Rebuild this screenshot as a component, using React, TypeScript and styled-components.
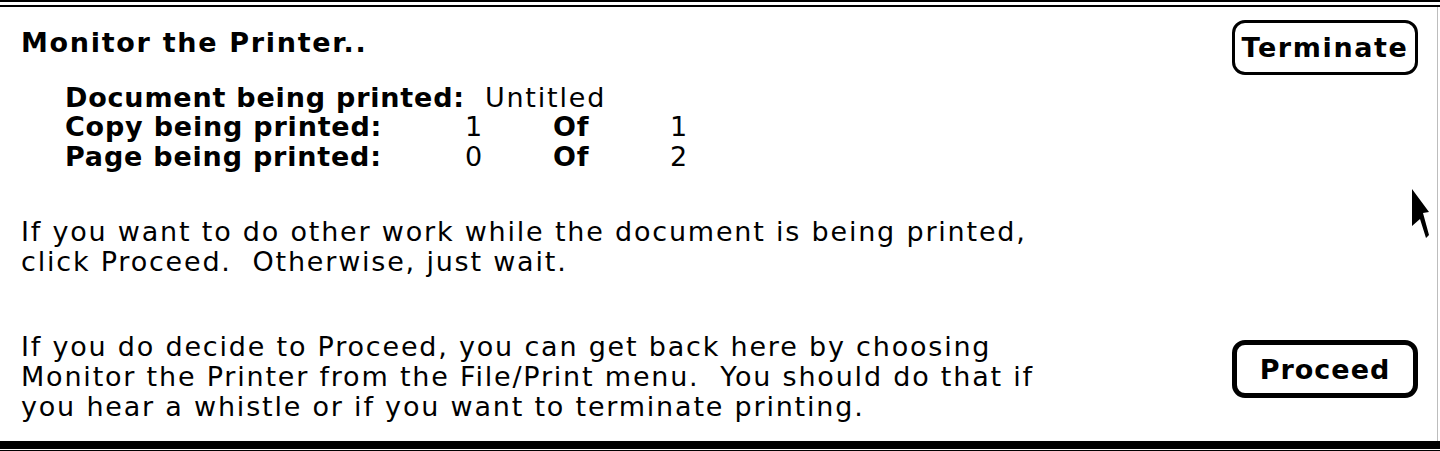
import React from "react";
import styled, { createGlobalStyle } from "styled-components";

const Global = createGlobalStyle`
  html, body { margin: 0; padding: 0; background: #fff; }
  body { font-family: "DejaVu Sans", "Liberation Sans", sans-serif; color: #000; }
`;

const Dialog = styled.div`
  position: relative;
  box-sizing: border-box;
  width: 1440px;
  height: 451px;
  display: flex;
  justify-content: space-between;
  padding: 28px 22px 0 21px;
  background: #fff;
  box-shadow:
    inset 0 2px 0 #000,
    inset 0 5px 0 #fff,
    inset 0 7px 0 #000,
    inset 0 -1px 0 #000,
    inset 0 -2px 0 #fff,
    inset 0 -10px 0 #000,
    inset -2px 0 0 #fff,
    inset -3px 0 0 #bdbdbd;
`;

const Content = styled.div`
  display: flex;
  flex-direction: column;
`;

const Title = styled.div`
  font-family: "DejaVu Sans", sans-serif;
  font-weight: bold;
  font-size: 27px;
  line-height: 30px;
  letter-spacing: 1.7px;
`;

const Details = styled.div`
  margin: 25px 0 0 44px;
  display: grid;
  grid-template-columns: 400px 88px 117px auto;
  grid-auto-rows: 29.5px;
  align-items: center;
`;

const DocRow = styled.div`
  grid-column: 1 / -1;
  display: flex;
  gap: 20px;
  align-items: baseline;
`;

const Label = styled.span`
  font-weight: bold;
  font-size: 27px;
  line-height: 30px;
  letter-spacing: 0.8px;
`;

const Value = styled.span`
  font-weight: 400;
  font-size: 27px;
  line-height: 30px;
  letter-spacing: 1.8px;
`;

const Paragraph = styled.p<{ $gap: number }>`
  margin: ${(p) => p.$gap}px 0 0 0;
  font-weight: 400;
  font-size: 27px;
  line-height: 30px;
  letter-spacing: 1.8px;
  white-space: pre;
`;

const ButtonColumn = styled.div`
  display: flex;
  flex-direction: column;
  justify-content: space-between;
  padding: 20px 0 53px;
  margin-top: -28px;
`;

const MacButton = styled.button<{ $default?: boolean }>`
  box-sizing: border-box;
  width: 186px;
  height: ${(p) => (p.$default ? 58 : 55)}px;
  border: ${(p) => (p.$default ? 5 : 3)}px solid #000;
  border-radius: 13px;
  background: #fff;
  color: #000;
  font-family: "DejaVu Sans", sans-serif;
  font-weight: bold;
  font-size: 27px;
  letter-spacing: ${(p) => (p.$default ? 1 : 1.6)}px;
  padding: 0;
  display: flex;
  align-items: center;
  justify-content: center;
`;

const Cursor = styled.svg`
  position: absolute;
  left: 1410px;
  top: 188px;
`;

export default function App() {
  return (
    <>
      <Global />
      <Dialog>
        <Content>
          <Title>Monitor the Printer..</Title>
          <Details>
            <DocRow>
              <Label>Document being printed:</Label>
              <Value>Untitled</Value>
            </DocRow>
            <Label>Copy being printed:</Label>
            <Value>1</Value>
            <Label>Of</Label>
            <Value>1</Value>
            <Label>Page being printed:</Label>
            <Value>0</Value>
            <Label>Of</Label>
            <Value>2</Value>
          </Details>
          <Paragraph $gap={45}>
            {"If you want to do other work while the document is being printed,\nclick Proceed.  Otherwise, just wait."}
          </Paragraph>
          <Paragraph $gap={55}>
            {"If you do decide to Proceed, you can get back here by choosing\nMonitor the Printer from the File/Print menu.  You should do that if\nyou hear a whistle or if you want to terminate printing."}
          </Paragraph>
        </Content>
        <ButtonColumn>
          <MacButton>Terminate</MacButton>
          <MacButton $default>Proceed</MacButton>
        </ButtonColumn>
        <Cursor width="22" height="52" viewBox="0 0 22 52">
          <polygon
            points="2,1 19,24 13,25 19,47 16,50 10,31 2,38"
            fill="#000"
          />
        </Cursor>
      </Dialog>
    </>
  );
}
